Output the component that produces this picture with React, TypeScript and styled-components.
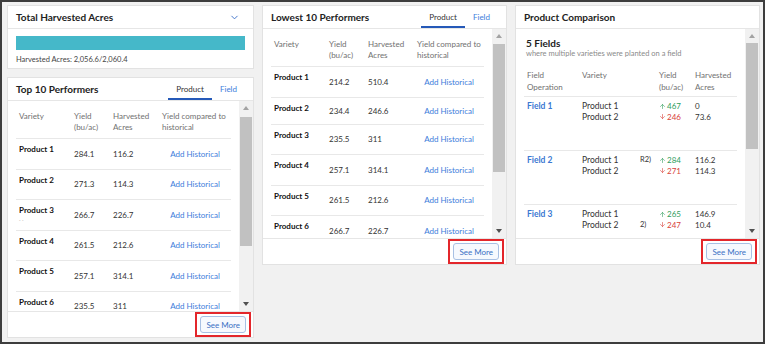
import styled, { createGlobalStyle } from 'styled-components';
import { ChevronDown, ArrowUp, ArrowDown } from 'lucide-react';

type PerfRow = { name: string; yieldVal: string; acres: string; h?: number; sub?: string };

const top10: PerfRow[] = [
  { name: 'Product 1', yieldVal: '284.1', acres: '116.2' },
  { name: 'Product 2', yieldVal: '271.3', acres: '114.3' },
  { name: 'Product 3', yieldVal: '266.7', acres: '226.7', sub: '·    ·' },
  { name: 'Product 4', yieldVal: '261.5', acres: '212.6' },
  { name: 'Product 5', yieldVal: '257.1', acres: '314.1' },
  { name: 'Product 6', yieldVal: '235.5', acres: '311' },
];

const low10: PerfRow[] = [
  { name: 'Product 1', yieldVal: '214.2', acres: '510.4' },
  { name: 'Product 2', yieldVal: '234.4', acres: '246.6', h: 27 },
  { name: 'Product 3', yieldVal: '235.5', acres: '311' },
  { name: 'Product 4', yieldVal: '257.1', acres: '314.1' },
  { name: 'Product 5', yieldVal: '261.5', acres: '212.6' },
  { name: 'Product 6', yieldVal: '266.7', acres: '226.7' },
];

type FieldRow = {
  field: string;
  notes: [string, string];
  up: string;
  down: string;
  acres: [string, string];
};

const fields: FieldRow[] = [
  { field: 'Field 1', notes: ['', ''], up: '467', down: '246', acres: ['0', '73.6'] },
  { field: 'Field 2', notes: ['R2)', ''], up: '284', down: '271', acres: ['116.2', '114.3'] },
  { field: 'Field 3', notes: ['', '2)'], up: '265', down: '247', acres: ['146.9', '10.4'] },
];

const Scrollbar = ({ offset, size }: { offset: number; size: number }) => (
  <Track>
    <ArrowBox>
      <UpArrow />
    </ArrowBox>
    <Rail>
      <Thumb $offset={offset} $size={size} />
    </Rail>
    <ArrowBox>
      <DownArrow />
    </ArrowBox>
  </Track>
);

const PerformerCard = ({
  title,
  rows,
  height,
  thumb,
}: {
  title: string;
  rows: PerfRow[];
  height: number;
  thumb: [number, number];
}) => (
  <Card $h={height}>
    <CardHeader>
      <Title>{title}</Title>
      <Tabs>
        <Tab $active>Product</Tab>
        <Tab>Field</Tab>
      </Tabs>
    </CardHeader>
    <Body>
      <Scroller>
        <HeadRow>
          <span>Variety</span>
          <span>
            Yield
            <br />
            (bu/ac)
          </span>
          <span>
            Harvested
            <br />
            Acres
          </span>
          <span>
            Yield compared to
            <br />
            historical
          </span>
        </HeadRow>
        {rows.map((r) => (
          <Row key={r.name} $h={r.h ?? 30.5}>
            <Variety>
              <strong>{r.name}</strong>
              <Sub>{r.sub ?? ''}</Sub>
            </Variety>
            <span>{r.yieldVal}</span>
            <span>{r.acres}</span>
            <LinkText>Add Historical</LinkText>
          </Row>
        ))}
      </Scroller>
      <Scrollbar offset={thumb[0]} size={thumb[1]} />
    </Body>
    <Footer>
      <Highlight>
        <SeeMore>See More</SeeMore>
      </Highlight>
    </Footer>
  </Card>
);

export default function App() {
  return (
    <>
      <GlobalStyle />
      <Frame>
        <Column>
          <Card $h={64}>
            <CardHeader>
              <Title>Total Harvested Acres</Title>
              <Chevron>
                <ChevronDown size={11} strokeWidth={2} color="#3a6fc8" />
              </Chevron>
            </CardHeader>
            <AcresBar />
            <AcresText>Harvested Acres: 2,056.6/2,060.4</AcresText>
          </Card>
          <PerformerCard title="Top 10 Performers" rows={top10} height={261} thumb={[2, 129]} />
        </Column>
        <PerformerCard title="Lowest 10 Performers" rows={low10} height={260} thumb={[1, 128]} />
        <Card $h={260}>
          <CardHeader>
            <Title>Product Comparison</Title>
          </CardHeader>
          <Body>
            <Scroller>
              <Intro>
                <Count>5 Fields</Count>
                <Hint>where multiple varieties were planted on a field</Hint>
              </Intro>
              <CompHead>
                <span>
                  Field
                  <br />
                  Operation
                </span>
                <span>Variety</span>
                <span />
                <span>
                  Yield
                  <br />
                  (bu/ac)
                </span>
                <span>
                  Harvested
                  <br />
                  Acres
                </span>
              </CompHead>
              {fields.map((f) => (
                <CompRow key={f.field}>
                  <FieldLink>{f.field}</FieldLink>
                  <Stack $size={8.5}>
                    <span>Product 1</span>
                    <span>Product 2</span>
                  </Stack>
                  <Stack $size={7.5}>
                    <span>{f.notes[0]}</span>
                    <span>{f.notes[1]}</span>
                  </Stack>
                  <Stack $size={8}>
                    <Delta $up>
                      <ArrowUp size={7} strokeWidth={2} />
                      {f.up}
                    </Delta>
                    <Delta>
                      <ArrowDown size={7} strokeWidth={2} />
                      {f.down}
                    </Delta>
                  </Stack>
                  <Stack $size={8}>
                    <span>{f.acres[0]}</span>
                    <span>{f.acres[1]}</span>
                  </Stack>
                </CompRow>
              ))}
            </Scroller>
            <Scrollbar offset={0} size={106} />
          </Body>
          <Footer>
            <Highlight>
              <SeeMore>See More</SeeMore>
            </Highlight>
          </Footer>
        </Card>
      </Frame>
    </>
  );
}

const GlobalStyle = createGlobalStyle`
  html, body {
    margin: 0;
    padding: 0;
  }
  body {
    font-family: Lato, 'Open Sans', sans-serif;
    color: #222;
  }
  * {
    box-sizing: border-box;
  }
`;

const Frame = styled.div`
  width: 765px;
  height: 344px;
  border: 2px solid #3d3d3d;
  background: #f1f1f1;
  padding: 3px 0 0 5px;
  display: grid;
  grid-template-columns: 247px 245px 245px;
  column-gap: 8px;
  align-items: start;
`;

const Column = styled.div`
  display: flex;
  flex-direction: column;
  gap: 8px;
`;

const Card = styled.section<{ $h: number }>`
  height: ${(p) => p.$h}px;
  background: #fff;
  border: 1px solid #e2e2e2;
  display: flex;
  flex-direction: column;
  overflow: hidden;
`;

const CardHeader = styled.header`
  flex: 0 0 23px;
  display: flex;
  align-items: center;
  justify-content: space-between;
  padding: 0 8px;
  border-bottom: 1px solid #e6e6e6;
`;

const Title = styled.h2`
  margin: 0;
  font-size: 10px;
  font-weight: 700;
  color: #222;
`;

const Chevron = styled.span`
  display: flex;
  margin-right: 5px;
`;

const AcresBar = styled.div`
  height: 14px;
  margin: 7px 8px 0;
  background: #45b8c9;
`;

const AcresText = styled.div`
  margin: 5px 8px 0;
  font-size: 7.5px;
  line-height: 10px;
  color: #444;
`;

const Tabs = styled.div`
  display: flex;
  align-self: stretch;
`;

const Tab = styled.div<{ $active?: boolean }>`
  display: flex;
  align-items: center;
  padding: 2px 8px 0;
  font-size: 8px;
  color: ${(p) => (p.$active ? '#333' : '#3d7ddb')};
  border-bottom: 2px solid ${(p) => (p.$active ? '#2559b8' : 'transparent')};
`;

const Body = styled.div`
  flex: 1;
  min-height: 0;
  display: flex;
`;

const Scroller = styled.div`
  flex: 1;
  min-width: 0;
  overflow: hidden;
  padding: 0 8px;
`;

const HeadRow = styled.div`
  display: grid;
  grid-template-columns: 55px 39px 49px 1fr;
  padding: 10px 3px 5px;
  border-bottom: 1px solid #e8e8e8;
  font-size: 8px;
  line-height: 11px;
  color: #707070;
`;

const Row = styled.div<{ $h: number }>`
  display: grid;
  grid-template-columns: 55px 39px 49px 1fr;
  align-items: center;
  min-height: ${(p) => p.$h}px;
  padding: 0 3px;
  border-bottom: 1px solid #e8e8e8;
  font-size: 8px;
  color: #333;
`;

const Variety = styled.div`
  align-self: start;
  display: flex;
  flex-direction: column;
  padding-top: 5px;
  line-height: 10px;
  strong {
    font-weight: 700;
    color: #111;
  }
`;

const Sub = styled.span`
  height: 10px;
  font-size: 6px;
  color: #c8c8c8;
`;

const LinkText = styled.span`
  justify-self: center;
  color: #3d7ddb;
`;

const Track = styled.div`
  flex: 0 0 14px;
  display: flex;
  flex-direction: column;
  background: #f1f1f1;
`;

const ArrowBox = styled.div`
  flex: 0 0 14px;
  display: flex;
  align-items: center;
  justify-content: center;
`;

const UpArrow = styled.span`
  width: 0;
  height: 0;
  border-left: 3.5px solid transparent;
  border-right: 3.5px solid transparent;
  border-bottom: 4px solid #a3a3a3;
`;

const DownArrow = styled.span`
  width: 0;
  height: 0;
  border-left: 3.5px solid transparent;
  border-right: 3.5px solid transparent;
  border-top: 4px solid #505050;
`;

const Rail = styled.div`
  flex: 1;
  display: flex;
  flex-direction: column;
`;

const Thumb = styled.div<{ $offset: number; $size: number }>`
  margin: ${(p) => p.$offset}px 1px 0;
  height: ${(p) => p.$size}px;
  background: #c1c1c1;
`;

const Footer = styled.footer`
  flex: 0 0 25px;
  display: flex;
  justify-content: flex-end;
  align-items: center;
  padding-right: 2px;
  border-top: 1px solid #e6e6e6;
`;

const Highlight = styled.div`
  display: flex;
  border: 2px solid #e3262b;
  padding: 2px 3px;
`;

const SeeMore = styled.button`
  height: 17px;
  padding: 0 5px;
  font-family: inherit;
  font-size: 8px;
  color: #3a70c4;
  background: #f6f9fe;
  border: 1px solid #a8c0e4;
  border-radius: 3px;
  cursor: pointer;
`;

const Intro = styled.div`
  padding: 8px 2px 0;
`;

const Count = styled.div`
  font-size: 10px;
  line-height: 12px;
  font-weight: 700;
  color: #222;
`;

const Hint = styled.div`
  font-size: 7.5px;
  line-height: 10px;
  color: #8a8a8a;
`;

const CompHead = styled.div`
  display: grid;
  grid-template-columns: 55px 58px 19px 36px 1fr;
  padding: 10px 3px 3px;
  border-bottom: 1px solid #e8e8e8;
  font-size: 8px;
  line-height: 12px;
  color: #707070;
`;

const CompRow = styled.div`
  display: grid;
  grid-template-columns: 55px 58px 19px 36px 1fr;
  align-items: start;
  min-height: 54px;
  padding: 4px 3px 0;
  border-bottom: 1px solid #e8e8e8;
  line-height: 10.5px;
  color: #333;
`;

const FieldLink = styled.span`
  font-size: 8.5px;
  font-weight: 700;
  color: #3b78d2;
`;

const Stack = styled.div<{ $size: number }>`
  display: flex;
  flex-direction: column;
  font-size: ${(p) => p.$size}px;
  span {
    min-height: 10.5px;
  }
`;

const Delta = styled.span<{ $up?: boolean }>`
  display: flex;
  align-items: center;
  gap: 1px;
  color: ${(p) => (p.$up ? '#2f9d5c' : '#d8423a')};
`;
